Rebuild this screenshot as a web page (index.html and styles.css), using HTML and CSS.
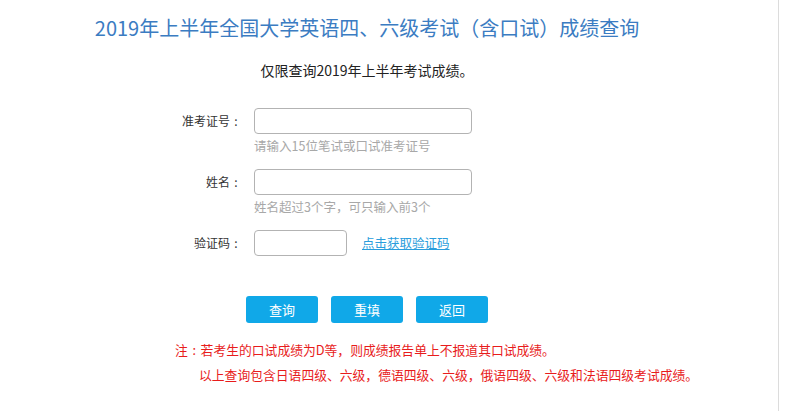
FILE: index.html
```html
<!DOCTYPE html>
<html lang="zh-CN">
<head>
<meta charset="utf-8">
<title>成绩查询</title>
<link rel="stylesheet" href="styles.css">
</head>
<body>
<div class="page">
  <h1 class="title">2019年上半年全国大学英语四、六级考试（含口试）成绩查询</h1>
  <p class="sub">仅限查询2019年上半年考试成绩。</p>
  <form class="form">
    <div class="row">
      <label class="label">准考证号<span class="colon">:</span></label>
      <div class="field">
        <input class="input" type="text">
        <div class="hint">请输入15位笔试或口试准考证号</div>
      </div>
    </div>
    <div class="row">
      <label class="label">姓名<span class="colon">:</span></label>
      <div class="field">
        <input class="input" type="text">
        <div class="hint">姓名超过3个字，可只输入前3个</div>
      </div>
    </div>
    <div class="row">
      <label class="label">验证码<span class="colon">:</span></label>
      <div class="field field-inline">
        <input class="input input-short" type="text">
        <a class="link" href="#">点击获取验证码</a>
      </div>
    </div>
    <div class="actions">
      <button type="button" class="btn">查询</button>
      <button type="button" class="btn">重填</button>
      <button type="button" class="btn">返回</button>
    </div>
  </form>
  <div class="notes">
    <p class="note">注<span class="colon">:</span>若考生的口试成绩为D等，则成绩报告单上不报道其口试成绩。</p>
    <p class="note note-indent">以上查询包含日语四级、六级，德语四级、六级，俄语四级、六级和法语四级考试成绩。</p>
  </div>
</div>
</body>
</html>
```

FILE: styles.css
```css
* { box-sizing: border-box; }
html, body { margin: 0; padding: 0; background: #fff; }
body {
  font-family: "Noto Sans CJK SC", "Noto Sans", sans-serif;
  color: #333;
}
.page {
  width: 779px;
  height: 411px;
  border-right: 1px solid #dcdcdc;
}
.title {
  width: 734px;
  margin: 0;
  padding-top: 13px;
  text-align: center;
  font-size: 20px;
  line-height: 30px;
  font-weight: normal;
  color: #3b7cc2;
}
.sub {
  width: 734px;
  margin: 17px 0 0;
  text-align: center;
  font-size: 14px;
  line-height: 20px;
  color: #222;
}
.form {
  margin: 28px 0 0;
  padding-left: 150px;
}
.row {
  display: flex;
  align-items: flex-start;
  margin-bottom: 13px;
}
.label {
  width: 92px;
  text-align: right;
  font-size: 12px;
  line-height: 26px;
  color: #333;
}
.colon {
  display: inline-block;
  width: 1em;
  text-align: center;
}
.field {
  margin-left: 12px;
  display: flex;
  flex-direction: column;
}
.field-inline {
  flex-direction: row;
  align-items: center;
}
.input {
  width: 218px;
  height: 26px;
  margin: 0;
  border: 1px solid #b3b3b3;
  border-radius: 4px;
  background: #fff;
  outline: none;
}
.input-short {
  width: 93px;
}
.hint {
  margin-top: 2px;
  font-size: 12.5px;
  line-height: 20px;
  color: #a8a8a8;
}
.link {
  margin-left: 15px;
  font-size: 12.5px;
  line-height: 20px;
  color: #2a9ddc;
  text-decoration: underline;
}
.actions {
  display: flex;
  gap: 13px;
  margin-top: 40px;
  padding-left: 96px;
}
.btn {
  width: 72px;
  height: 27px;
  padding: 0;
  border: none;
  border-radius: 3px;
  background: #10a8e8;
  color: #fff;
  font-family: "Noto Sans CJK SC", "Noto Sans", sans-serif;
  font-size: 13px;
  line-height: 27px;
}
.notes {
  margin-top: 14px;
  padding-left: 175px;
}
.note {
  margin: 0;
  font-size: 12.8px;
  line-height: 25px;
  color: #e81c1c;
}
.note-indent {
  padding-left: 24px;
}
```
